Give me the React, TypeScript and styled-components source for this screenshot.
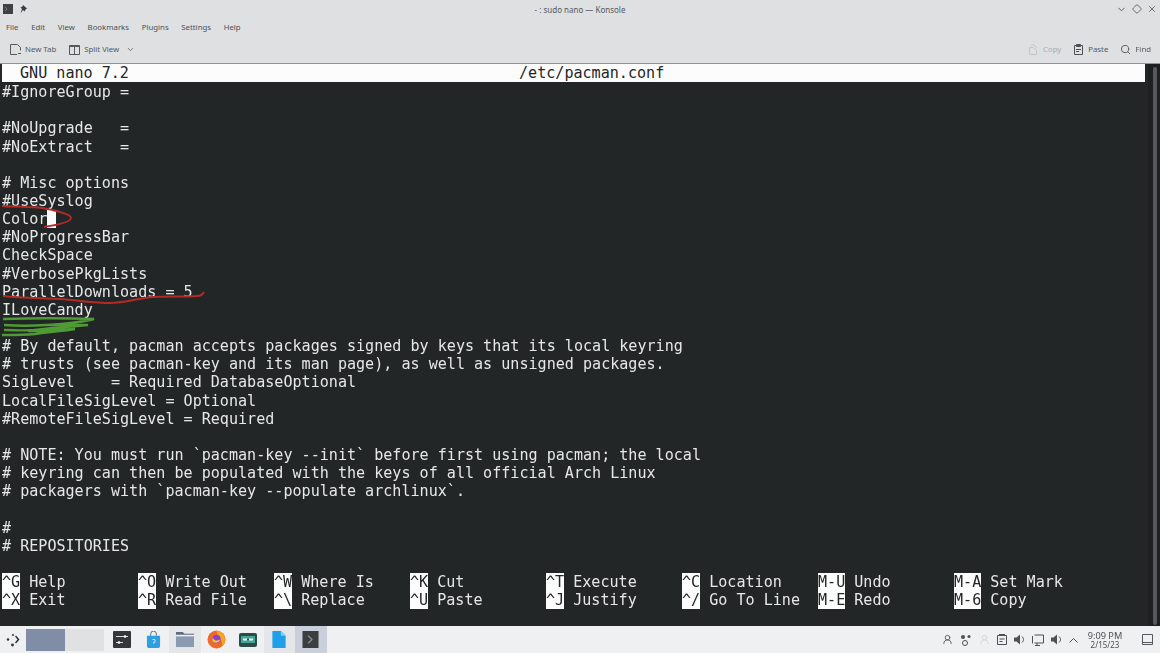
import React from 'react'
import styled, { createGlobalStyle } from 'styled-components'
import { ChevronDown, Diamond, Search, UserRound, X } from 'lucide-react'

const GlobalStyle = createGlobalStyle`
  html, body {
    margin: 0;
    padding: 0;
    width: 1160px;
    height: 653px;
    overflow: hidden;
    background: #232627;
  }
`

const Screen = styled.div`
  width: 1160px;
  height: 653px;
  display: flex;
  flex-direction: column;
  font-family: 'Noto Sans', 'Liberation Sans', sans-serif;
  color: #4d5154;
  filter: blur(0.4px);
`

const Chrome = styled.header`
  height: 63px;
  background: #dee0e2;
  border-bottom: 1px solid #8f9396;
  display: flex;
  flex-direction: column;
`

const TitleBar = styled.div`
  height: 18px;
  padding: 0 3px 0 3px;
  display: grid;
  grid-template-columns: 1fr auto 1fr;
  align-items: center;
`

const TitleLeft = styled.div`
  display: flex;
  align-items: center;
  gap: 6px;
`

const TitleText = styled.div`
  font-size: 8px;
  color: #55595c;
`

const WindowButtons = styled.div`
  display: flex;
  justify-content: flex-end;
  align-items: center;
  gap: 5px;
  color: #54585b;
`

const MenuBar = styled.nav`
  height: 17px;
  padding: 0 0 0 6px;
  display: flex;
  align-items: center;
  gap: 12.7px;
  font-size: 7.8px;
`

const ToolBar = styled.div`
  height: 28px;
  padding: 0 9px 0 10px;
  display: flex;
  align-items: center;
  font-size: 7.8px;
`

const ToolButton = styled.div<{ $disabled?: boolean; $gap?: number }>`
  display: flex;
  align-items: center;
  gap: 4px;
  margin-right: ${(p) => p.$gap ?? 0}px;
  color: ${(p) => (p.$disabled ? '#a9adb0' : '#55595c')};
`

const Spacer = styled.div`
  flex: 1;
`

const Terminal = styled.main`
  position: relative;
  height: 562px;
  background: #232627;
  font-family: 'DejaVu Sans Mono', 'Liberation Mono', monospace;
  font-size: 15.08px;
  line-height: 18.15px;
  color: #e6e8e8;
  white-space: pre;
  overflow: hidden;
`

const ScrollGutter = styled.div`
  position: absolute;
  top: 0;
  right: 0;
  bottom: 0;
  width: 12px;
  background: #1d1f21;
`

const ScrollHandle = styled.div`
  position: absolute;
  top: 3px;
  right: 3px;
  bottom: 1px;
  width: 4.5px;
  border-radius: 3px;
  background: #56595b;
`

const NanoTitle = styled.div`
  width: 1143px;
  margin-left: 2px;
  height: 18.15px;
  background: #fcfcfc;
  color: #232627;
  position: relative;
  padding-left: 18px;
  box-sizing: border-box;
`

const NanoFile = styled.span`
  position: absolute;
  left: 517px;
`

const Buffer = styled.div`
  padding: 1px 0 0 2px;
  height: 490px;
`

const Line = styled.div`
  height: 18.15px;
`

const Cursor = styled.span`
  display: inline-block;
  width: 9.07px;
  height: 18.15px;
  vertical-align: top;
  background: #fcfcfc;
`

const Shortcuts = styled.div`
  padding-left: 2px;
  display: grid;
  grid-template-columns: repeat(8, 136px);
`

const Shortcut = styled.div`
  height: 18.15px;
`

const Key = styled.span`
  background: #fcfcfc;
  color: #232627;
  margin-right: 9.07px;
`

const Marks = styled.svg`
  position: absolute;
  left: 0;
  top: 0;
  pointer-events: none;
`

const TaskBar = styled.footer`
  height: 27px;
  background: #eff0f1;
  display: flex;
  align-items: stretch;
`

const Launcher = styled.div`
  width: 26px;
  display: flex;
  align-items: center;
  justify-content: center;
`

const Pager = styled.div`
  display: flex;
  align-items: center;
`

const Desktop = styled.div<{ $active?: boolean }>`
  width: 39px;
  height: 22px;
  background: ${(p) => (p.$active ? '#808da6' : '#dfe1e2')};
`

const Tasks = styled.div`
  margin-left: 2px;
  display: flex;
`

const Task = styled.div<{ $state?: 'open' | 'active' }>`
  width: 31.5px;
  display: flex;
  align-items: center;
  justify-content: center;
  background: ${(p) =>
    p.$state === 'active' ? '#c9cfdb' : p.$state === 'open' ? '#e4e6e8' : 'transparent'};
`

const Tray = styled.div`
  display: flex;
  align-items: center;
  gap: 7px;
  padding-right: 7px;
  color: #55595c;
`

const Clock = styled.div`
  width: 44px;
  margin: 0 8px 0 -2px;
  text-align: center;
  font-size: 9.2px;
  line-height: 9px;
  color: #4d5154;
`

const ClockDate = styled.div`
  font-size: 8px;
`

const lines = [
  '#IgnoreGroup =',
  '',
  '#NoUpgrade   =',
  '#NoExtract   =',
  '',
  '# Misc options',
  '#UseSyslog',
  'COLOR',
  '#NoProgressBar',
  'CheckSpace',
  '#VerbosePkgLists',
  'ParallelDownloads = 5',
  'ILoveCandy',
  '',
  '# By default, pacman accepts packages signed by keys that its local keyring',
  '# trusts (see pacman-key and its man page), as well as unsigned packages.',
  'SigLevel    = Required DatabaseOptional',
  'LocalFileSigLevel = Optional',
  '#RemoteFileSigLevel = Required',
  '',
  '# NOTE: You must run `pacman-key --init` before first using pacman; the local',
  '# keyring can then be populated with the keys of all official Arch Linux',
  '# packagers with `pacman-key --populate archlinux`.',
  '',
  '#',
  '# REPOSITORIES',
]

const shortcuts = [
  ['^G', 'Help', '^X', 'Exit'],
  ['^O', 'Write Out', '^R', 'Read File'],
  ['^W', 'Where Is', '^\\', 'Replace'],
  ['^K', 'Cut', '^U', 'Paste'],
  ['^T', 'Execute', '^J', 'Justify'],
  ['^C', 'Location', '^/', 'Go To Line'],
  ['M-U', 'Undo', 'M-E', 'Redo'],
  ['M-A', 'Set Mark', 'M-6', 'Copy'],
]

const App = () => {
  return (
    <Screen>
      <GlobalStyle />
      <Chrome>
        <TitleBar>
          <TitleLeft>
            <svg width="10" height="10" viewBox="0 0 10 10">
              <rect width="10" height="10" fill="#3d4245" />
              <path d="M2 3l2 2-2 2" stroke="#778" fill="none" />
            </svg>
            <svg width="8" height="9" viewBox="0 0 8 9">
              <path d="M4 0l4 3.500-1.500 1-1 2-1.500-1.500-2.500 3.500 1.500-4.500-1.500-1.500 2-1z" fill="#3a3d40" />
            </svg>
          </TitleLeft>
          <TitleText>- : sudo nano — Konsole</TitleText>
          <WindowButtons>
            <ChevronDown size={11} />
            <Diamond size={10} />
            <X size={10} />
          </WindowButtons>
        </TitleBar>
        <MenuBar>
          <span>File</span>
          <span>Edit</span>
          <span>View</span>
          <span>Bookmarks</span>
          <span>Plugins</span>
          <span>Settings</span>
          <span>Help</span>
        </MenuBar>
        <ToolBar>
          <ToolButton $gap={13}>
            <svg width="11" height="11" viewBox="0 0 11 11" fill="none" stroke="#55595c">
              <path d="M7 10.500H.5v-10h7l3 3v3" />
              <path d="M8 9.500h3" />
            </svg>
            <span>New Tab</span>
          </ToolButton>
          <ToolButton $gap={0}>
            <svg width="11" height="11" viewBox="0 0 11 11" fill="none" stroke="#55595c">
              <path d="M.5 1.500h10v9H.5zM5.500 1.500v9" />
              <path d="M.5 2.500h10" />
            </svg>
            <span>Split View</span>
            <ChevronDown size={9} style={{ marginLeft: 3 }} />
          </ToolButton>
          <Spacer />
          <ToolButton $disabled $gap={12}>
            <svg width="11" height="11" viewBox="0 0 11 11" fill="none" stroke="#c4c7c9">
              <path d="M1.500 3.500v7h7v-4l-3-3z" />
              <path d="M3 1h3l3 3" />
            </svg>
            <span>Copy</span>
          </ToolButton>
          <ToolButton $gap={12}>
            <svg width="11" height="12" viewBox="0 0 11 12" fill="none" stroke="#4d5154">
              <path d="M1.500 2.500h8v9h-8z" />
              <path d="M3.500 1.500h4v2h-4z" fill="#4d5154" />
              <path d="M3 6.500h5M3 8.500h3" />
            </svg>
            <span>Paste</span>
          </ToolButton>
          <ToolButton>
            <Search size={11} />
            <span>Find</span>
          </ToolButton>
        </ToolBar>
      </Chrome>
      <Terminal>
        <NanoTitle>
          <span>GNU nano 7.2</span>
          <NanoFile>/etc/pacman.conf</NanoFile>
        </NanoTitle>
        <Buffer>
          {lines.map((line, i) =>
            line === 'COLOR' ? (
              <Line key={i}>
                Color
                <Cursor />
              </Line>
            ) : (
              <Line key={i}>{line}</Line>
            ),
          )}
        </Buffer>
        <Shortcuts>
          {[0, 2].map((row) =>
            shortcuts.map((s) => (
              <Shortcut key={s[row]}>
                <Key>{s[row]}</Key>
                {s[row + 1]}
              </Shortcut>
            )),
          )}
        </Shortcuts>
        <ScrollGutter />
        <ScrollHandle />
        <Marks width="1160" height="562" viewBox="0 0 1160 562" fill="none">
          <path d="M2 142c8 1 17 0 25 1 9 0 18 1 25 3 9 2 19 5 19 8 0 3-8 6-27 9" stroke="#b32b25" strokeWidth="1.800" />
          <path d="M3 232c18 2 38 2 57 3 17 1 34 4 50 4 15 0 29-5 43-6 15-1 30 0 44-1 3 0 6-2 7-4" stroke="#b32b25" strokeWidth="2" />
          <path d="M3 255c30-1 62-1 91 0-15 4-32 5-48 6 14 0 30-1 42 0-20 2-42 3-60 6 16 0 32-1 47-2-12 2-28 3-40 5-11 1-22 1-33 1M4 261c14 1 28 1 42 0M4 266c10 0 20 1 32 0" stroke="#4f9a34" strokeWidth="2.400" />
        </Marks>
      </Terminal>
      <TaskBar>
        <Launcher>
          <svg width="16" height="16" viewBox="0 0 16 16" fill="#2b2e30">
            <circle cx="3" cy="7.500" r="1.200" />
            <circle cx="8" cy="3" r="1" />
            <circle cx="7.500" cy="13" r="1.400" />
            <path d="M11 3.500l3.500 4-3.500 4-1-1 2.500-3-2.500-3z" />
          </svg>
        </Launcher>
        <Pager>
          <Desktop $active />
          <Desktop />
        </Pager>
        <Tasks>
          <Task>
            <svg width="18" height="17" viewBox="0 0 18 17">
              <rect width="18" height="17" rx="1" fill="#33373a" />
              <path d="M3 5.500h12M3 11.500h7" stroke="#d8dadb" />
              <circle cx="12" cy="5.500" r="1.300" fill="#fff" />
              <circle cx="6" cy="11.500" r="1.300" fill="#fff" />
            </svg>
          </Task>
          <Task>
            <svg width="15" height="17" viewBox="0 0 16 18">
              <path d="M1 5h14v11a2 2 0 0 1-2 2H3a2 2 0 0 1-2-2z" fill="#2d9fe3" />
              <path d="M5 5V3a3 3 0 0 1 6 0v2" stroke="#4a6b80" fill="none" />
              <path d="M7 9h2.500v3H8v1.500" stroke="#d5ecfa" fill="none" />
            </svg>
          </Task>
          <Task $state="open">
            <svg width="18" height="17" viewBox="0 0 19 18">
              <path d="M0 1h7l2 2h10v14H0z" fill="#5d6c83" />
              <rect y="4" width="19" height="2" fill="#f0f2f4" />
              <rect y="6" width="19" height="11" fill="#8b9ab1" />
            </svg>
          </Task>
          <Task>
            <svg width="19" height="19" viewBox="0 0 18 18">
              <circle cx="9" cy="9" r="8.500" fill="#f0692a" />
              <path d="M9 1a8 8 0 0 1 8 8c0 3-1 5-3 6 1-3 0-6-3-8z" fill="#f6a821" />
              <circle cx="9" cy="8.500" r="4" fill="#8c3fd0" />
              <path d="M5.500 7c1 3 4 4 7 2-1 4-6 4-7.500 1z" fill="#f6c72b" />
            </svg>
          </Task>
          <Task>
            <svg width="18" height="14" viewBox="0 0 18 14">
              <rect width="18" height="14" rx="2" fill="#2c4a48" />
              <rect x="2" y="3" width="14" height="7" fill="#3fa79a" />
              <rect x="4" y="5.500" width="10" height="2" fill="#eaf3f2" />
              <rect x="8" y="5.500" width="2" height="2" fill="#2c4a48" />
            </svg>
          </Task>
          <Task $state="open">
            <svg width="14" height="17" viewBox="0 0 14 18">
              <path d="M0 0h9l5 5v13H0z" fill="#1f9fe8" />
              <path d="M9 0l5 5H9z" fill="#86cdf5" />
            </svg>
          </Task>
          <Task $state="active">
            <svg width="17" height="17" viewBox="0 0 17 18">
              <rect width="17" height="18" fill="#3b3f40" />
              <path d="M6 5l4 4-4 4" stroke="#8d9192" strokeWidth="1.300" fill="none" />
            </svg>
          </Task>
        </Tasks>
        <Spacer />
        <Tray>
          <UserRound size={11} />
          <svg width="12" height="12" viewBox="0 0 12 12" fill="#4d5154">
            <circle cx="3" cy="3" r="2" />
            <circle cx="9" cy="2.500" r="1.500" />
            <circle cx="5" cy="9" r="2.500" fill="none" stroke="#4d5154" />
          </svg>
          <UserRound size={11} color="#d3d5d7" />
          <svg width="10" height="11" viewBox="0 0 10 11" fill="none" stroke="#4d5154">
            <path d="M.5 1.500h9v9h-9z" />
            <path d="M2 .5h6M2.500 5h5M2.500 7.500h3" />
          </svg>
          <svg width="11" height="11" viewBox="0 0 11 11" fill="#4d5154">
            <path d="M0 3.500h2.500L6 .5v10L2.500 7.500H0z" />
            <path d="M8 2.500c2 2 2 4 0 6" fill="none" stroke="#4d5154" />
          </svg>
          <svg width="12" height="12" viewBox="0 0 12 12" fill="none" stroke="#4d5154">
            <path d="M2.500 1h9v8h-9" />
            <path d="M.5 2v7.500M5 9v2M3 11.500h5" />
          </svg>
          <svg width="11" height="11" viewBox="0 0 11 11" fill="#4d5154">
            <path d="M0 3.500h2.500L6 .5v10L2.500 7.500H0z" />
            <path d="M8 2.500c2 2 2 4 0 6" fill="none" stroke="#4d5154" />
          </svg>
          <svg width="9" height="6" viewBox="0 0 9 6" fill="none" stroke="#4d5154">
            <path d="M.5 5.500l4-4 4 4" />
          </svg>
          <Clock>
            9:09 PM
            <ClockDate>2/15/23</ClockDate>
          </Clock>
          <svg width="11" height="11" viewBox="0 0 11 11" fill="none" stroke="#55595c">
            <path d="M.5.5h10v10H.5z" />
            <path d="M.5 8.500h10" />
          </svg>
        </Tray>
      </TaskBar>
    </Screen>
  )
}

export default App
